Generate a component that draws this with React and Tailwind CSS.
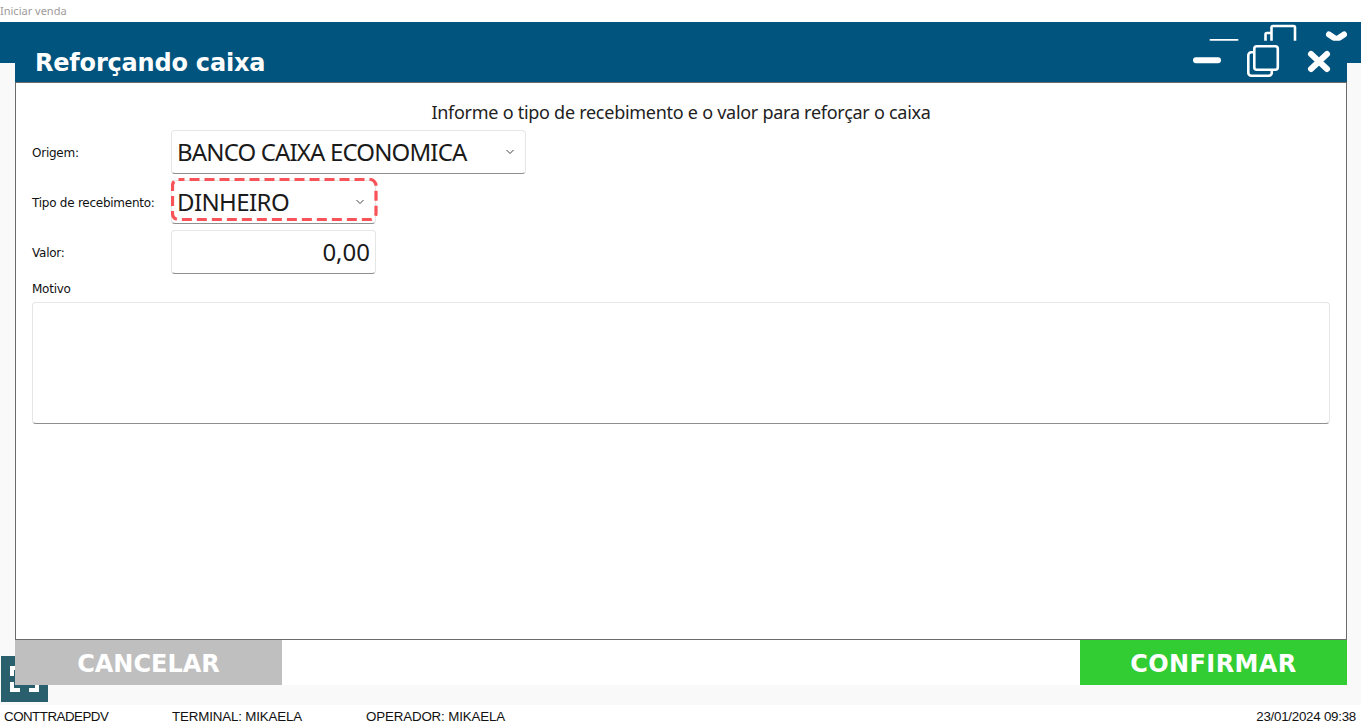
import React from "react";

const Chevron = () => (
  <svg width="10" height="6" viewBox="0 0 10 6" fill="none" stroke="#444" strokeWidth="1">
    <path d="M1.500 1l3.500 3.500 3.500-3.500" />
  </svg>
);

function Row({ label, children }) {
  return (
    <div className="flex items-center mt-[6px]">
      <span className="w-[155px] shrink-0 pt-[2px] pl-[16px] text-[12px] text-[#111] font-['DejaVu_Sans',sans-serif] tracking-[-0.25px]">{label}</span>
      {children}
    </div>
  );
}

const fieldCls =
  "h-[44px] rounded-[4px] bg-white border border-[#e6e6e6] border-b-[#8f8f8f] flex items-center text-[#1a1a1a] text-[24px] font-['Noto_Sans','Open_Sans',sans-serif]";

export default function App() {
  return (
    <div className="w-[1361px] h-[726px] overflow-hidden bg-white flex flex-col font-['Liberation_Sans',sans-serif]">
      <div className="h-[22px] shrink-0 text-[11px] leading-[21px] text-[#a09a9a] font-['Noto_Sans',sans-serif]">Iniciar venda</div>

      <div className="relative h-[683px] shrink-0 bg-[#f9f9f9]">
        <div className="absolute top-0 inset-x-0 h-[41px] bg-[#00547e]" />
        <div className="absolute left-[1px] top-[634px] w-[47px] h-[46px] bg-[#2a606e]">
          <div className="absolute left-[9px] top-[10px] w-[10px] h-[10px] border-l-[4px] border-t-[4px] border-white" />
          <div className="absolute left-[28px] top-[10px] w-[10px] h-[10px] border-r-[4px] border-t-[4px] border-white" />
          <div className="absolute left-[9px] top-[26px] w-[10px] h-[10px] border-l-[4px] border-b-[4px] border-white" />
          <div className="absolute left-[28px] top-[26px] w-[10px] h-[10px] border-r-[4px] border-b-[4px] border-white" />
        </div>

        <div className="relative ml-[15px] w-[1332px] h-[663px] flex flex-col">
          <div className="h-[60px] shrink-0 bg-[#00547e] relative flex items-end pl-[20px] pb-[2px]">
            <h1 className="text-[24px] leading-[34px] font-bold text-white font-['DejaVu_Sans',sans-serif] tracking-[-0.2px]">Reforçando caixa</h1>
            <svg className="absolute right-0 top-0" width="154" height="60" viewBox="0 0 154 60" fill="none" stroke="white" strokeLinejoin="round" strokeLinecap="round">
              <defs>
                <clipPath id="ghost">
                  <rect x="0" y="0" width="154" height="18.700" />
                </clipPath>
              </defs>
              <g clipPath="url(#ghost)">
                <path d="M17.500 18h27" strokeWidth="2" />
                <path d="M72.500 20v-7.500q0-1.500 1.500-1.500h4M78.500 20v-14.500q0-1.500 1.500-1.500h20.500q1.500 0 1.500 1.500v14.500" strokeWidth="2.600" />
                <path d="M136 12.500l7.500 5 7.500-5" strokeWidth="6" />
              </g>
              <path d="M3 38.300h22" strokeWidth="6" />
              <rect x="55.300" y="30.300" width="23.500" height="23.500" rx="3" strokeWidth="2.600" />
              <rect x="61.300" y="24.300" width="23.500" height="23.500" rx="2.500" strokeWidth="2.600" fill="#00547e" />
              <path d="M118 32l16 15M134 32l-16 15" strokeWidth="6" />
            </svg>
          </div>

          <div className="h-[558px] shrink-0 bg-white border border-[#6b6b6b] flex flex-col">
            <p className="pt-[17px] text-center text-[18px] leading-[24px] tracking-[-0.27px] text-[#222] font-['Noto_Sans','Open_Sans',sans-serif]">
              Informe o tipo de recebimento e o valor para reforçar o caixa
            </p>
            <Row label="Origem:">
              <div className={`${fieldCls} w-[355px] pl-[5px] pr-[10px] justify-between`}>
                <span className="tracking-[-0.85px]">BANCO CAIXA ECONOMICA</span>
                <Chevron />
              </div>
            </Row>
            <Row label="Tipo de recebimento:">
              <div className={`${fieldCls} relative w-[205px] pl-[5px] pr-[10px] justify-between`}>
                <span className="tracking-[-0.6px]">DINHEIRO</span>
                <Chevron />
                <svg className="absolute -left-[1px] -top-[3px]" width="207" height="44" viewBox="0 0 207 44" fill="none">
                  <rect x="1.500" y="1.500" width="203.500" height="40" rx="6" stroke="#f85358" strokeWidth="3.200" strokeDasharray="10 5" strokeDashoffset="4" />
                </svg>
              </div>
            </Row>
            <Row label="Valor:">
              <div className={`${fieldCls} w-[205px] pr-[5px] justify-end`}>0,00</div>
            </Row>
            <div className="mt-[6px] pl-[16px] text-[12px] leading-[18px] text-[#111] font-['DejaVu_Sans',sans-serif] tracking-[-0.25px]">Motivo</div>
            <div className="mt-[4px] ml-[16px] w-[1298px] h-[122px] rounded-[4px] bg-white border border-[#e6e6e6] border-b-[#8f8f8f]" />
          </div>

          <div className="h-[45px] shrink-0 bg-white flex justify-between">
            <button className="w-[267px] pt-[2px] bg-[#bfbfbf] text-white font-bold text-[24px] font-['DejaVu_Sans',sans-serif]">CANCELAR</button>
            <button className="w-[267px] pt-[2px] bg-[#32cd32] text-white font-bold text-[24px] font-['DejaVu_Sans',sans-serif] tracking-[0.4px]">CONFIRMAR</button>
          </div>
        </div>
      </div>

      <div className="h-[21px] shrink-0 pt-[2px] bg-white flex items-center text-[13.330px] text-[#111] tracking-[-0.15px]">
        <span className="w-[172px] pl-[4px] tracking-[-0.5px]">CONTTRADEPDV</span>
        <span className="w-[194px]">TERMINAL: MIKAELA</span>
        <span>OPERADOR: MIKAELA</span>
        <span className="ml-auto pr-[5px] tracking-[-0.25px]">23/01/2024 09:38</span>
      </div>
    </div>
  );
}
